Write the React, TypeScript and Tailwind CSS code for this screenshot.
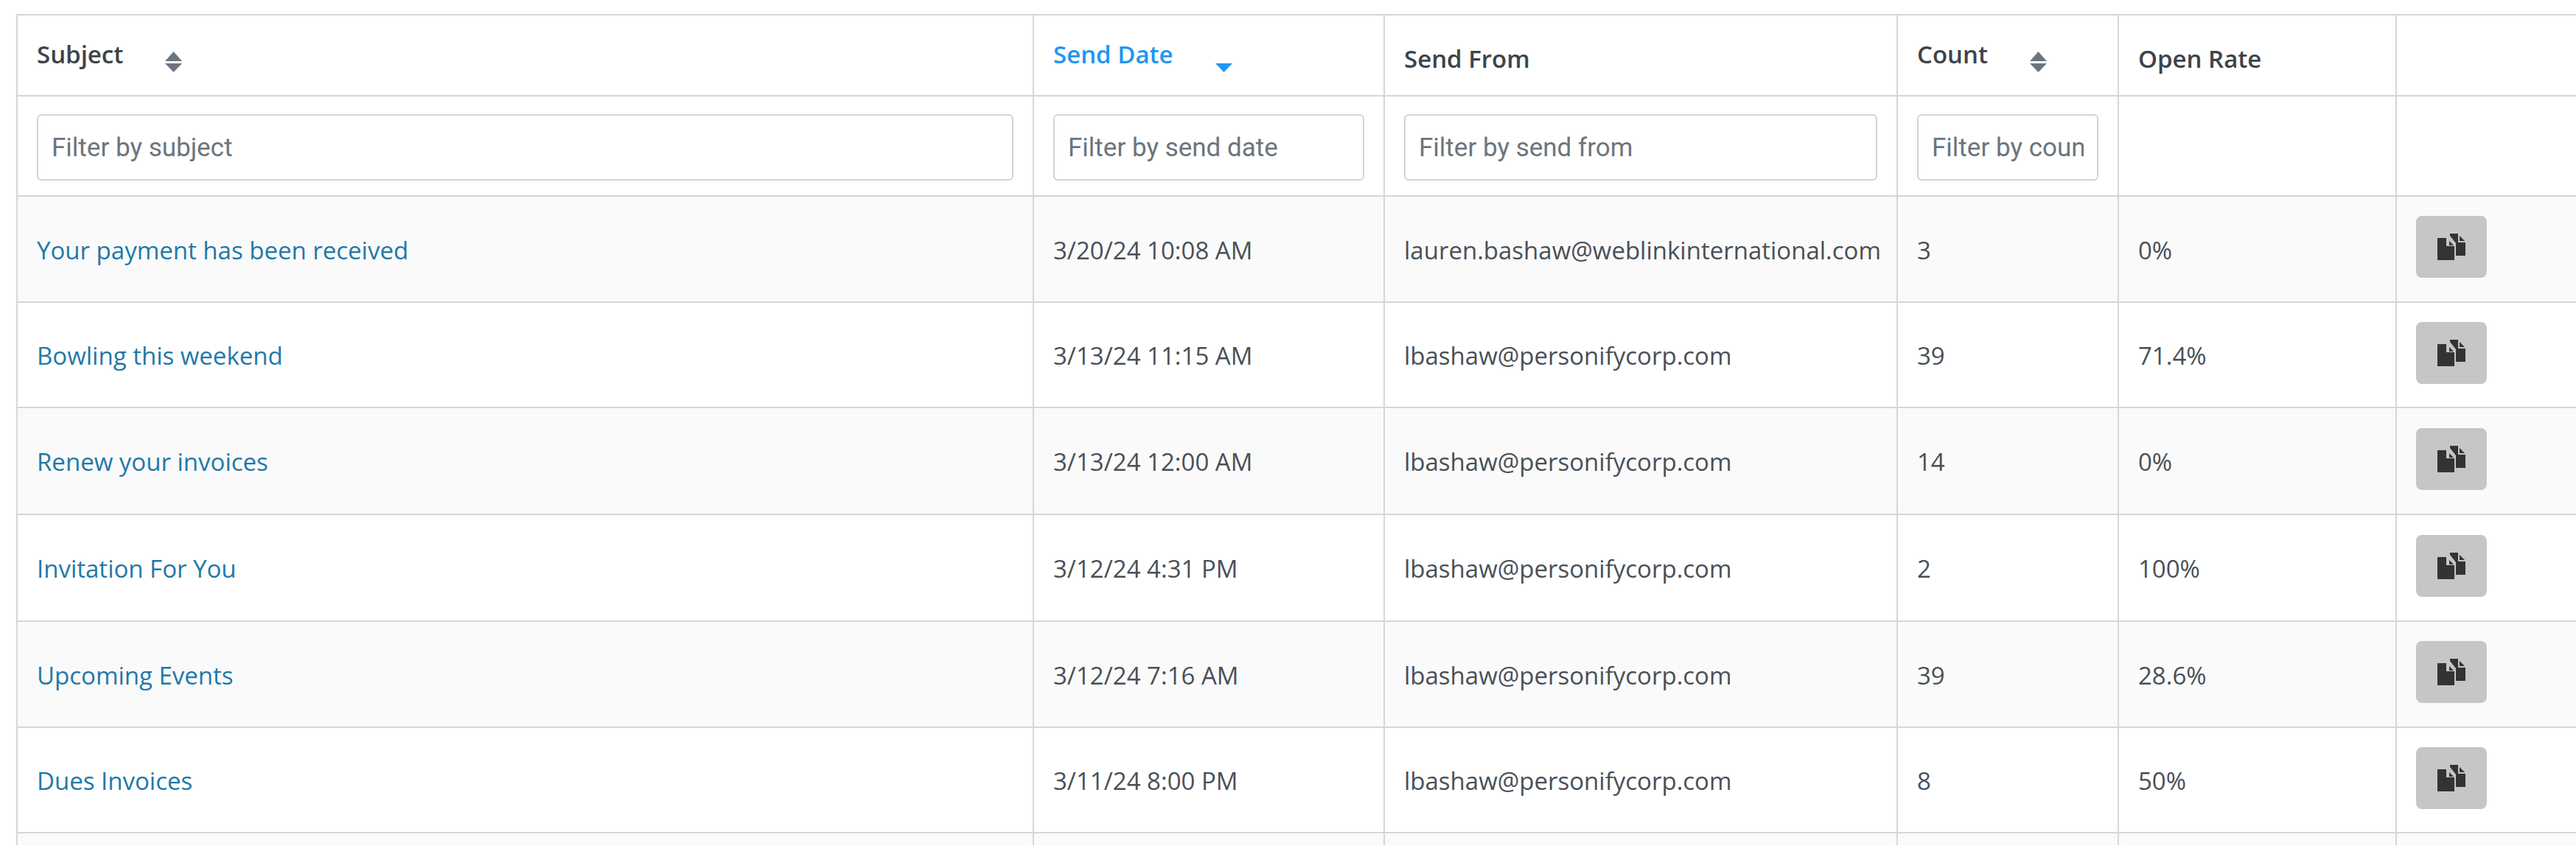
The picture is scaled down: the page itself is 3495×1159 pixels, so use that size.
import React from "react";

const rows = [
  { subject: "Your payment has been received", date: "3/20/24 10:08 AM", from: "lauren.bashaw@weblinkinternational.com", count: "3", rate: "0%", h: "h-[144px]" },
  { subject: "Bowling this weekend", date: "3/13/24 11:15 AM", from: "lbashaw@personifycorp.com", count: "39", rate: "71.4%", h: "h-[143px]" },
  { subject: "Renew your invoices", date: "3/13/24 12:00 AM", from: "lbashaw@personifycorp.com", count: "14", rate: "0%", h: "h-[145px]" },
  { subject: "Invitation For You", date: "3/12/24 4:31 PM", from: "lbashaw@personifycorp.com", count: "2", rate: "100%", h: "h-[145px]" },
  { subject: "Upcoming Events", date: "3/12/24 7:16 AM", from: "lbashaw@personifycorp.com", count: "39", rate: "28.6%", h: "h-[144px]" },
  { subject: "Dues Invoices", date: "3/11/24 8:00 PM", from: "lbashaw@personifycorp.com", count: "8", rate: "50%", h: "h-[143px]" },
];

const SortIcon = ({ up = true, color = "#6c757d" }: { up?: boolean; color?: string }) => (
  <svg width="23" height="28" viewBox="0 0 23 28" className="ml-[57px] mt-[21px] shrink-0">
    {up && <path d="M11.5 0 L23 13 H0 Z" fill={color} />}
    <path d="M0 16 H23 L11.5 28 Z" fill={color} />
  </svg>
);

const CopyIcon = () => (
  <svg width="38" height="36" viewBox="0 0 38 36" fill="#333">
    <path d="M0 6 H12 V17 H23 V36 H0 Z" />
    <path d="M16 10 L22 16 H16 Z" />
    <path d="M17 0 H28 V12 H38 V30 H25 V13 L17 3 Z" />
    <path d="M30 3 L37 10 H30 Z" />
  </svg>
);

const Head = ({ children, className = "" }: { children?: React.ReactNode; className?: string }) => (
  <th className={`border-2 border-[#d6d6d6] px-[26px] align-top text-left font-semibold text-[#3d4349] ${className}`}>
    {children}
  </th>
);

const FilterCell = ({ placeholder }: { placeholder?: string }) => (
  <td className="border-2 border-[#d6d6d6] px-[26px] pt-[4px] align-middle">
    {placeholder && (
      <input
        placeholder={placeholder}
        className="block h-[90px] w-full rounded-[6px] border-2 border-[#ced4da] bg-white px-[18px] font-['Roboto',sans-serif] text-[35px] font-normal placeholder:text-[#6c757d]"
      />
    )}
  </td>
);

const Cell = ({ children }: { children?: React.ReactNode }) => (
  <td className="border-2 border-[#d6d6d6] px-[26px] pt-[3px] whitespace-nowrap">{children}</td>
);

export default function App() {
  return (
    <div className="h-[1159px] w-[3495px] overflow-hidden bg-white">
      <div className="h-[1147px] overflow-hidden pl-[22px] pt-[19px]">
        <table className="w-[3600px] table-fixed border-collapse font-['Open_Sans',sans-serif] text-[33px] text-[#495057]">
          <colgroup>
            <col className="w-[1379px]" />
            <col className="w-[476px]" />
            <col className="w-[696px]" />
            <col className="w-[300px]" />
            <col className="w-[377px]" />
            <col />
          </colgroup>
          <thead>
            <tr className="h-[110px]">
              <Head>
                <div className="flex pt-[28px]">Subject<SortIcon /></div>
              </Head>
              <Head className="text-[#2196f3]">
                <div className="flex pt-[28px]">Send Date<SortIcon up={false} color="#2196f3" /></div>
              </Head>
              <Head><div className="pt-[34px]">Send From</div></Head>
              <Head>
                <div className="flex pt-[28px]">Count<SortIcon /></div>
              </Head>
              <Head><div className="pt-[34px]">Open Rate</div></Head>
              <Head />
            </tr>
            <tr className="h-[136px]">
              <FilterCell placeholder="Filter by subject" />
              <FilterCell placeholder="Filter by send date" />
              <FilterCell placeholder="Filter by send from" />
              <FilterCell placeholder="Filter by count" />
              <FilterCell />
              <FilterCell />
            </tr>
          </thead>
          <tbody>
            {rows.map((r, i) => (
              <tr key={r.subject} className={`${r.h} ${i % 2 === 0 ? "bg-[#fafafa]" : "bg-white"}`}>
                <Cell><a className="text-[#2278a8]">{r.subject}</a></Cell>
                <Cell>{r.date}</Cell>
                <Cell>{r.from}</Cell>
                <Cell>{r.count}</Cell>
                <Cell>{r.rate}</Cell>
                <td className="border-2 border-[#d6d6d6] px-[26px]">
                  <button className="mb-[6px] flex h-[84px] w-[96px] items-center justify-center rounded-[8px] bg-[#c6c6c6]"><CopyIcon /></button>
                </td>
              </tr>
            ))}
            <tr className="h-[144px] bg-[#fafafa]">
              <Cell /><Cell /><Cell /><Cell /><Cell /><Cell />
            </tr>
          </tbody>
        </table>
      </div>
    </div>
  );
}
